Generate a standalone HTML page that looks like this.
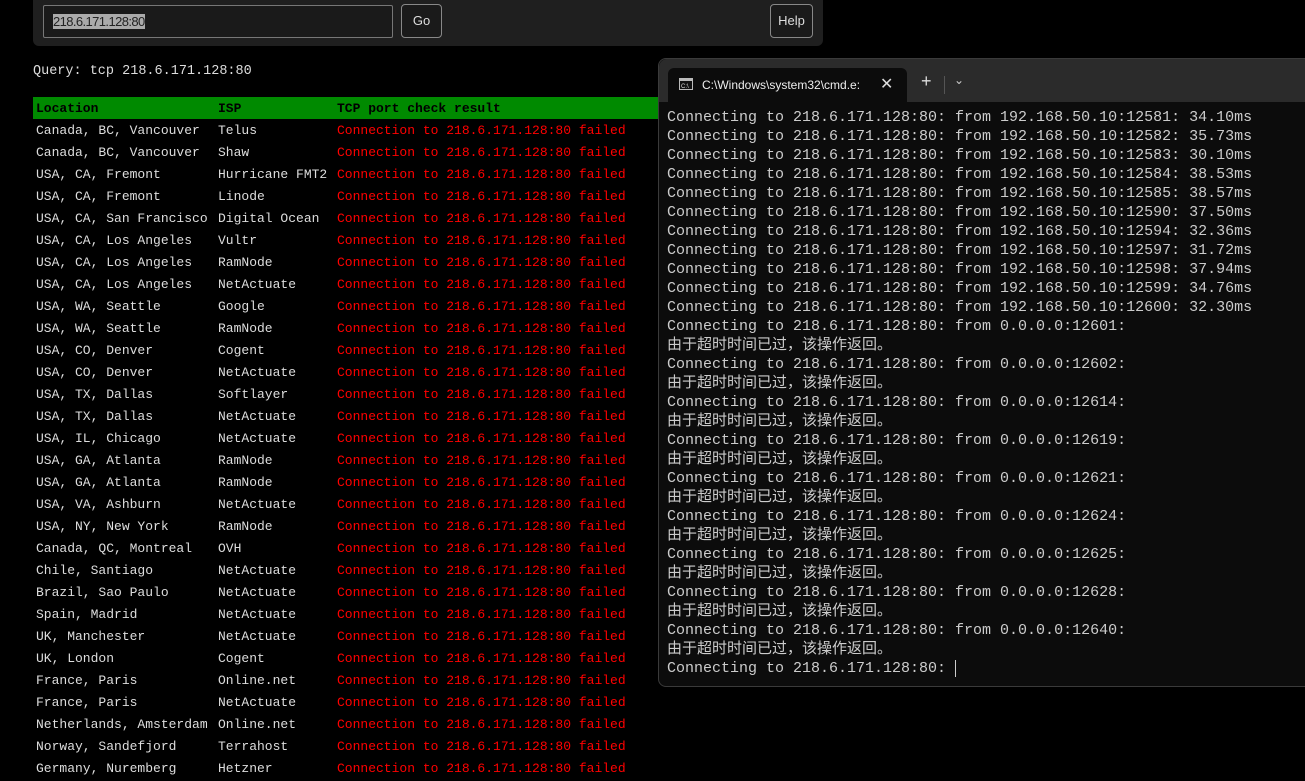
<!DOCTYPE html>
<html><head><meta charset="utf-8"><style>
body{margin:0;width:1305px;height:781px;background:#000;overflow:hidden;position:relative;font-family:"Liberation Mono",monospace}
.bar{position:absolute;left:33px;top:-6px;width:790px;height:52px;background:#1f1f1f;border-radius:6px}
.inp{position:absolute;left:43px;top:5px;width:348px;height:31px;border:1px solid #777;background:#1a1a1a;border-radius:2px}
.inp span{position:absolute;left:9px;top:8px;font:13px "Liberation Sans",sans-serif;background:#aaa;color:#222;letter-spacing:-0.6px}
.btn{position:absolute;top:4px;height:32px;border:1px solid #888;border-radius:4px;background:#1a1a1a;color:#ddd;font:13px "Liberation Sans",sans-serif;text-align:center;line-height:32px}
.q{position:absolute;left:33px;top:64px;color:#ddd;font-size:13.5px}
table{position:absolute;left:33px;top:97px;border-collapse:collapse;font-size:13px;color:#ddd}
td{height:22px;padding:0 0 0 3px;white-space:pre;vertical-align:middle}
tr.h td{background:#008a00;color:#000;font-weight:bold;height:22px}
td.r{color:#f00}
.term{position:absolute;left:658px;top:58px;width:660px;height:629px;background:#0c0c0c;border-radius:8px 0 0 8px;border:1px solid #3a3a3a;box-sizing:border-box}
.tb{position:absolute;left:0;top:0;right:0;height:43px;background:#2b2b2b;border-radius:8px 0 0 0}
.tab{position:absolute;left:9px;top:9px;width:239px;height:34px;background:#0c0c0c;border-radius:6px 6px 0 0;color:#eee;font:12px "Liberation Sans",sans-serif}
.out{position:absolute;left:8px;top:49px;color:#ccc;font-family:"Liberation Mono","Noto Sans CJK SC",monospace;font-size:15px;line-height:19px;white-space:pre}
</style></head><body>
<div class="bar"></div>
<div class="inp"><span>218.6.171.128:80</span></div>
<div class="btn" style="left:401px;width:39px">Go</div>
<div class="btn" style="left:770px;width:41px">Help</div>
<div class="q">Query: tcp 218.6.171.128:80</div>
<table>
<tr class="h"><td style="width:179px">Location</td><td style="width:116px">ISP</td><td style="width:330px">TCP port check result</td></tr>
<tr><td>Canada, BC, Vancouver</td><td>Telus</td><td class="r">Connection to 218.6.171.128:80 failed</td></tr>
<tr><td>Canada, BC, Vancouver</td><td>Shaw</td><td class="r">Connection to 218.6.171.128:80 failed</td></tr>
<tr><td>USA, CA, Fremont</td><td>Hurricane FMT2</td><td class="r">Connection to 218.6.171.128:80 failed</td></tr>
<tr><td>USA, CA, Fremont</td><td>Linode</td><td class="r">Connection to 218.6.171.128:80 failed</td></tr>
<tr><td>USA, CA, San Francisco</td><td>Digital Ocean</td><td class="r">Connection to 218.6.171.128:80 failed</td></tr>
<tr><td>USA, CA, Los Angeles</td><td>Vultr</td><td class="r">Connection to 218.6.171.128:80 failed</td></tr>
<tr><td>USA, CA, Los Angeles</td><td>RamNode</td><td class="r">Connection to 218.6.171.128:80 failed</td></tr>
<tr><td>USA, CA, Los Angeles</td><td>NetActuate</td><td class="r">Connection to 218.6.171.128:80 failed</td></tr>
<tr><td>USA, WA, Seattle</td><td>Google</td><td class="r">Connection to 218.6.171.128:80 failed</td></tr>
<tr><td>USA, WA, Seattle</td><td>RamNode</td><td class="r">Connection to 218.6.171.128:80 failed</td></tr>
<tr><td>USA, CO, Denver</td><td>Cogent</td><td class="r">Connection to 218.6.171.128:80 failed</td></tr>
<tr><td>USA, CO, Denver</td><td>NetActuate</td><td class="r">Connection to 218.6.171.128:80 failed</td></tr>
<tr><td>USA, TX, Dallas</td><td>Softlayer</td><td class="r">Connection to 218.6.171.128:80 failed</td></tr>
<tr><td>USA, TX, Dallas</td><td>NetActuate</td><td class="r">Connection to 218.6.171.128:80 failed</td></tr>
<tr><td>USA, IL, Chicago</td><td>NetActuate</td><td class="r">Connection to 218.6.171.128:80 failed</td></tr>
<tr><td>USA, GA, Atlanta</td><td>RamNode</td><td class="r">Connection to 218.6.171.128:80 failed</td></tr>
<tr><td>USA, GA, Atlanta</td><td>RamNode</td><td class="r">Connection to 218.6.171.128:80 failed</td></tr>
<tr><td>USA, VA, Ashburn</td><td>NetActuate</td><td class="r">Connection to 218.6.171.128:80 failed</td></tr>
<tr><td>USA, NY, New York</td><td>RamNode</td><td class="r">Connection to 218.6.171.128:80 failed</td></tr>
<tr><td>Canada, QC, Montreal</td><td>OVH</td><td class="r">Connection to 218.6.171.128:80 failed</td></tr>
<tr><td>Chile, Santiago</td><td>NetActuate</td><td class="r">Connection to 218.6.171.128:80 failed</td></tr>
<tr><td>Brazil, Sao Paulo</td><td>NetActuate</td><td class="r">Connection to 218.6.171.128:80 failed</td></tr>
<tr><td>Spain, Madrid</td><td>NetActuate</td><td class="r">Connection to 218.6.171.128:80 failed</td></tr>
<tr><td>UK, Manchester</td><td>NetActuate</td><td class="r">Connection to 218.6.171.128:80 failed</td></tr>
<tr><td>UK, London</td><td>Cogent</td><td class="r">Connection to 218.6.171.128:80 failed</td></tr>
<tr><td>France, Paris</td><td>Online.net</td><td class="r">Connection to 218.6.171.128:80 failed</td></tr>
<tr><td>France, Paris</td><td>NetActuate</td><td class="r">Connection to 218.6.171.128:80 failed</td></tr>
<tr><td>Netherlands, Amsterdam</td><td>Online.net</td><td class="r">Connection to 218.6.171.128:80 failed</td></tr>
<tr><td>Norway, Sandefjord</td><td>Terrahost</td><td class="r">Connection to 218.6.171.128:80 failed</td></tr>
<tr><td>Germany, Nuremberg</td><td>Hetzner</td><td class="r">Connection to 218.6.171.128:80 failed</td></tr>
</table>
<div class="term">
<div class="tb">
<div class="tab">
<svg style="position:absolute;left:11px;top:10px" width="14" height="12"><rect x="0.5" y="0.5" width="13" height="11" fill="#111" stroke="#bbb"/><rect x="1" y="1" width="12" height="2" fill="#bbb"/><text x="2" y="10" font-size="6" fill="#ddd" font-family="Liberation Sans">C:\</text></svg>
<span style="position:absolute;left:34px;top:10px">C:\Windows\system32\cmd.e:</span>
<span style="position:absolute;left:212px;top:6px;font-size:16px;color:#ddd">✕</span>
</div>
<span style="position:absolute;left:262px;top:12px;color:#ddd;font:18px 'Liberation Sans',sans-serif">+</span>
<div style="position:absolute;left:285px;top:17px;width:1px;height:18px;background:#555"></div>
<span style="position:absolute;left:295px;top:14px;color:#ccc;font:12px 'Liberation Sans',sans-serif">⌄</span>
</div>
<div class="out">Connecting to 218.6.171.128:80: from 192.168.50.10:12581: 34.10ms
Connecting to 218.6.171.128:80: from 192.168.50.10:12582: 35.73ms
Connecting to 218.6.171.128:80: from 192.168.50.10:12583: 30.10ms
Connecting to 218.6.171.128:80: from 192.168.50.10:12584: 38.53ms
Connecting to 218.6.171.128:80: from 192.168.50.10:12585: 38.57ms
Connecting to 218.6.171.128:80: from 192.168.50.10:12590: 37.50ms
Connecting to 218.6.171.128:80: from 192.168.50.10:12594: 32.36ms
Connecting to 218.6.171.128:80: from 192.168.50.10:12597: 31.72ms
Connecting to 218.6.171.128:80: from 192.168.50.10:12598: 37.94ms
Connecting to 218.6.171.128:80: from 192.168.50.10:12599: 34.76ms
Connecting to 218.6.171.128:80: from 192.168.50.10:12600: 32.30ms
Connecting to 218.6.171.128:80: from 0.0.0.0:12601:
由于超时时间已过，该操作返回。
Connecting to 218.6.171.128:80: from 0.0.0.0:12602:
由于超时时间已过，该操作返回。
Connecting to 218.6.171.128:80: from 0.0.0.0:12614:
由于超时时间已过，该操作返回。
Connecting to 218.6.171.128:80: from 0.0.0.0:12619:
由于超时时间已过，该操作返回。
Connecting to 218.6.171.128:80: from 0.0.0.0:12621:
由于超时时间已过，该操作返回。
Connecting to 218.6.171.128:80: from 0.0.0.0:12624:
由于超时时间已过，该操作返回。
Connecting to 218.6.171.128:80: from 0.0.0.0:12625:
由于超时时间已过，该操作返回。
Connecting to 218.6.171.128:80: from 0.0.0.0:12628:
由于超时时间已过，该操作返回。
Connecting to 218.6.171.128:80: from 0.0.0.0:12640:
由于超时时间已过，该操作返回。
Connecting to 218.6.171.128:80: <span style="border-left:1px solid #ccc"></span></div>
</div>
</body></html>
